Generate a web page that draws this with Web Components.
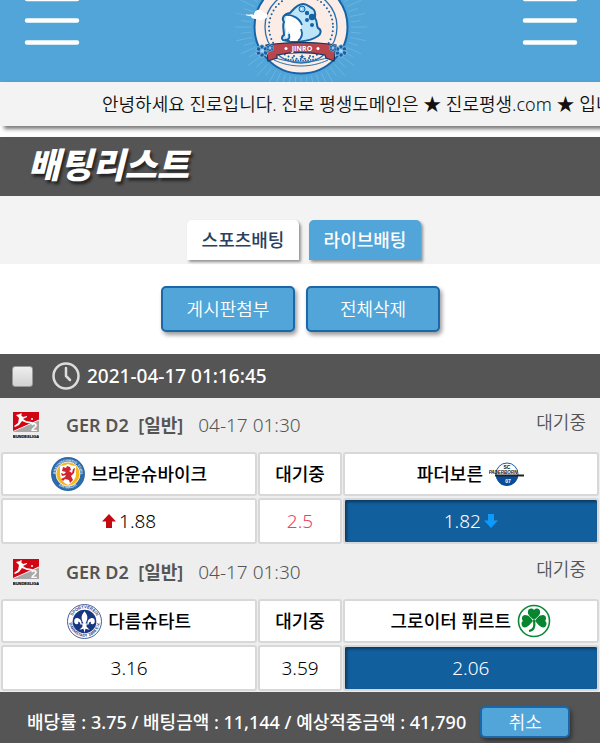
<!DOCTYPE html>
<html lang="ko">
<head>
<meta charset="utf-8">
<meta name="viewport" content="width=device-width, initial-scale=1">
<title>배팅리스트</title>
<style>
html{background:#fff}
body{margin:0;font:350 18px/24px "Noto Sans","Noto Sans CJK KR",sans-serif;color:#111;overflow-x:hidden;
--blue:#52a5d8;--deep:#125f9e;--dark:#555;--pale:#f3f3f3}
</style>
</head>
<body>
<bet-page></bet-page>
<script>
const define = (name, html, init) => {
  const t = document.createElement('template');
  t.innerHTML = html;
  customElements.define(name, class extends HTMLElement {
    connectedCallback() {
      if (this.shadowRoot) return;
      this.attachShadow({mode: 'open'}).append(t.content.cloneNode(true));
      if (init) init(this, this.shadowRoot);
    }
  });
};

/* Emblem: sunburst, toad inside a ring, ribbon with the name */
const rays = Array.from({length: 60}, (_, i) => {
  const a = i * Math.PI / 30, r = i % 2 ? 60 : 66;
  return `M${(80 + 50 * Math.cos(a)).toFixed(1)} ${(27 + 50 * Math.sin(a)).toFixed(1)}L${(80 + r * Math.cos(a)).toFixed(1)} ${(27 + r * Math.sin(a)).toFixed(1)}`;
}).join('');
const flower = (x, y, s) => `<g transform="translate(${x} ${y}) scale(${s})"><g fill="#1760a3" stroke="#8cc6ea" stroke-width=".8">${[0,60,120,180,240,300].map(a => `<circle cx="0" cy="-4" r="2.3" transform="rotate(${a})"/>`).join('')}</g><circle r="1.8" fill="#a5d8f4"/></g>`;

define('brand-emblem', `
<style>:host{display:block}svg{display:block;width:160px;height:82px}</style>
<svg viewBox="0 0 160 82" role="img" aria-label="JINRO">
<path d="${rays}" stroke="#6ab3df" stroke-width="1" fill="none"/>
<circle cx="80" cy="27" r="46.5" fill="#fbece5" stroke="#1663aa" stroke-width="2"/>
<circle cx="80" cy="27" r="36" fill="none" stroke="#2a70ad" stroke-width="1.3"/>
<circle cx="80" cy="27" r="32" fill="none" stroke="#1663aa" stroke-width="2" stroke-dasharray="0 4.2" stroke-linecap="round"/>
<path d="M62 40c-2-1-1-4 1-5 0-5-2-9 0-13-3-4 0-8 6-9 4-4 7-9 13-9 4 0 7 3 10 5 3 2 2 6 2 9 3 4 1 7 3 10 4 2 3 6 0 8-9 6-24 7-35 4z" fill="#bde5fa" stroke="#1762a3" stroke-width="2"/>
<path d="M65 16c8-2 13 4 15 10 1 4 1 10-2 15h-9c1-4 0-8-2-10l-1 7c-3-2 0-5-1-9-2-5 0-9 0-13z" fill="#fff"/>
<path d="M64 15c8-1 15 4 17 10M64 40c4 0 5-2 4-6M77 41c4-3 5-7 3-12" fill="none" stroke="#1762a3" stroke-width="1.800"/>
<circle cx="81" cy="9" r="3" fill="#8bceef" stroke="#1762a3"/><circle cx="80.500" cy="9" r="1" fill="#fff"/>
<g fill="#1762a3"><circle cx="86" cy="13" r="2.2"/><circle cx="91" cy="17" r="3.2"/><circle cx="86" cy="20" r="2"/><circle cx="91" cy="25" r="2"/></g>
<path d="M49 56c19 8 43 8 62 0M53 60c17 8 37 8 54 0" fill="none" stroke="#2a70ad" stroke-width="1"/>
<path d="M64 59c11 2 21 2 32 0" fill="none" stroke="#1663aa" stroke-width="1.500" stroke-dasharray="1.500 1"/>
<path d="M81 54l1 2h2l-2 1 1 2-2-1-2 1 1-2-2-1h2z" fill="#1663aa"/>
<circle cx="73" cy="56" r="1" fill="#1663aa"/><circle cx="89" cy="56" r="1" fill="#1663aa"/>
<path d="M53 44c18-2 38-2 55 0l7 1-2 16-8-3-1-3c-16-3-34-3-48 0v3l-9 3-2-16z" fill="#b9454d" stroke="#15375f" stroke-width="1.200"/>
<circle cx="65" cy="48.500" r="1.500" fill="#fff"/><circle cx="97" cy="48.500" r="1.500" fill="#fff"/>
<text x="81" y="51" text-anchor="middle" font-family="Open Sans,sans-serif" font-weight="700" font-size="7" fill="#fff">JINRO</text>
${flower(41,51,1)}${flower(49,48,.6)}${flower(120,51,1)}${flower(112,48,.6)}
<path d="M25 14c3 2 5-1 8 1 0-6 8-7 10-2 5 0 5 5 0 6-3 2-6 1-8 0-3 0-5-1-5-3-2 0-5 0-5-2z" fill="#fff"/>
</svg>`);

define('menu-button', `
<style>:host{display:block}button{display:block;padding:0;border:0;background:none}svg{display:block;width:56px;height:48px}</style>
<button type="button" aria-label="메뉴"><svg viewBox="0 0 56 48"><path d="M3-1h50M3 20.500h50M3 42.500h50" stroke="#fff" stroke-width="4.500" stroke-linecap="round"/></svg></button>`);

define('site-header', `
<style>:host{display:flex;justify-content:space-between;align-items:flex-start;padding:0 22px 0 24px;background:var(--blue);overflow:hidden}</style>
<menu-button></menu-button><brand-emblem></brand-emblem><menu-button></menu-button>`);

define('notice-bar', `
<style>:host{display:block;background:var(--pale);box-shadow:4px 3px 4px #0008;padding:10px 0 10px 102px;overflow:hidden;white-space:nowrap}</style><slot></slot>`);

define('page-title', `
<style>:host{display:block;margin-top:11px;background:var(--dark);box-shadow:3px 3px 4px #0006;padding:6px 28px 13px}
h1{margin:0;font:italic 900 35px/40px "Noto Sans CJK KR",sans-serif;color:#fff;text-shadow:2px 3px 3px #0009}</style><h1><slot></slot></h1>`);

define('tab-strip', `
<style>:host{display:flex;justify-content:center;gap:10px;padding:24px 0 4px 8px;background:var(--pale)}</style><slot></slot>`);

define('bet-tab', `
<style>:host{display:block}a{display:block;box-sizing:border-box;min-width:112px;padding:8px 14px;text-align:center;text-decoration:none;font-weight:500;color:#29405e;background:#fff;border-radius:5px 5px 0 0;box-shadow:2px 2px 3px #0006}
:host([active]) a{background:var(--blue);color:#fff}</style><a href="#"><slot></slot></a>`);

define('action-button', `
<style>:host{display:block}button{display:block;box-sizing:border-box;min-width:134px;padding:9px 10px;border:2px solid #1b67a8;border-radius:5px;background:var(--blue);color:#fff;font:inherit;line-height:24px;box-shadow:2px 3px 4px #0006}
:host([small]) button{min-width:90px;padding:2px 10px}</style><button type="button"><slot></slot></button>`);

define('action-row', `
<style>:host{display:flex;justify-content:center;gap:11px;padding:22px 0 22px 1px;background:#fff}</style><slot></slot>`);

define('slip-header', `
<style>:host{display:block;background:var(--dark)}
label{display:flex;align-items:center;padding:8px 12px;color:#fff;font-size:19px;font-weight:500;line-height:28px}
input{appearance:none;margin:0 19px 0 0;width:21px;height:21px;border:1px solid #999;border-radius:3px;background:linear-gradient(#eee,#d2d2d2)}
svg{width:28px;height:28px;margin-right:7px}</style>
<label><input type="checkbox"><svg viewBox="0 0 28 28" fill="none" stroke="#ddd" stroke-linecap="round" stroke-linejoin="round" aria-hidden="true"><circle cx="14" cy="14" r="12.500" stroke-width="2.500"/><path d="M14 6v8l4 4" stroke-width="2.500"/></svg><slot></slot></label>`);

define('league-logo', `
<style>:host{display:block}svg{display:block;width:26px;height:27px}</style>
<svg viewBox="0 0 26 27" role="img" aria-label="Bundesliga 2"><path d="M0 0h26v20H0z" fill="#d20515"/><path d="M0 20 26 8v12z" fill="#a7a7a7"/><path d="M0 19.500 26 8" stroke="#fff"/>
<path d="M3 3l4-1 1-1 1 1-1 1 2 2 4-1v1l-4 2 3 2 6 1 2 2-7-1-5-2-3 4-4 2-1-1 4-3 1-5-2-2z" fill="#fff"/><circle cx="19" cy="7" r="1" fill="#fff"/>
<text x="21" y="19" text-anchor="middle" font-family="Liberation Sans,sans-serif" font-weight="700" font-size="11" fill="#fff">2</text>
<text x="13" y="26" text-anchor="middle" font-family="Liberation Sans,sans-serif" font-weight="700" font-size="4" fill="#111" stroke="#111" stroke-width=".2">BUNDESLIGA</text></svg>`);

const ringText = (id, r, top, bottom, color, size) => `<defs><path id="${id}a" d="M${17-r} 17A${r} ${r} 0 0 1 ${17+r} 17"/><path id="${id}b" d="M${17-r-2} 17A${r+2} ${r+2} 0 0 0 ${17+r+2} 17"/></defs><g font-family="Liberation Sans,sans-serif" font-weight="700" font-size="${size}" fill="${color}" text-anchor="middle"><text><textPath href="#${id}a" startOffset="50%">${top}</textPath></text><text><textPath href="#${id}b" startOffset="50%">${bottom}</textPath></text></g>`;

const crests = {
  braunschweig: `<svg viewBox="0 0 34 34" width="34" height="34"><circle cx="17" cy="17" r="17" fill="#2c6aa9"/>${ringText('bs',12.5,'BRAUNSCHWEIG TURN','EINTRACHT','#e5eff7',3.4)}<circle cx="17" cy="17" r="12" fill="#f7b718" stroke="#fff" stroke-width=".8"/><path d="M9 9q4 0 8-2 4 2 8 2v8q0 7-8 11-8-4-8-11z" fill="#fff"/>
<path d="M12 10l3 1 1-2 3 1 1 3-2 1 3 2 1-4 2-1-1 5-3 3 2 4-3 3-1-3-4-1-2 2-2-2 4-2 1-2-4 1-1-3 3 1 2-2-4-1z" fill="#cf2331"/></svg>`,
  darmstadt: `<svg viewBox="0 0 34 34" width="35" height="35"><circle cx="17" cy="17" r="16.500" fill="#fff" stroke="#213c86" stroke-width=".8"/>${ringText('da',12.7,'SPORTVEREIN','DARMSTADT 1898 E.V.','#213c86',4)}<circle cx="17" cy="17" r="11.500" fill="#173784"/>
<path d="M17 7c3 4 4 6 1 12h2c-1-5 7-8 7-2 0 3-3 3-4 2 1-3-2-2-2 1h-2v2l3 3-4-1-1 4-1-4-4 1 3-3v-2h-2c0-3-3-4-2-1-1 1-4 1-4-2 0-6 8-3 7 2h2c-3-6-2-8 1-12z" fill="#fff"/></svg>`,
  paderborn: `<svg viewBox="0 0 36 24" width="36" height="24"><circle cx="18" cy="12" r="11" fill="#fff" stroke="#145faa"/><path d="M7 13h22a11 11 0 0 1-22 0z" fill="#074f9b"/><path d="M6 13.500h29" stroke="#222" stroke-width="2"/><g font-family="Liberation Sans,sans-serif" font-weight="700" text-anchor="middle" fill="#111"><text x="18" y="7" font-size="5">SC</text><text x="14" y="12" font-size="4.500" font-style="italic">PADERBORN</text><text x="19" y="21" font-size="5" fill="#fff">07</text></g></svg>`,
  fuerth: `<svg viewBox="0 0 34 34" width="34" height="34"><circle cx="17" cy="17" r="15.500" fill="#fff" stroke="#0b8738" stroke-width="1.600"/>
<g fill="#07852f"><path d="M17 16c-3-3-7-5-6-9 1-3 4-3 6-1 2-2 5-2 6 1 1 4-3 6-6 9z"/><path d="M16 17c-3 3-6 8-10 6-2-2-2-5 0-6-2-2-1-6 2-6 4 0 6 3 8 6zM18 17c3 3 6 8 10 6 2-2 2-5 0-6 2-2 1-6-2-6-4 0-6 3-8 6z"/></g><path d="M17 16c1 7 0 10-5 11" fill="none" stroke="#07852f" stroke-width="2.200"/></svg>`
};
define('team-crest', `<style>:host{display:block}svg{display:block}</style>`, (el, root) => {
  const t = document.createElement('template');
  t.innerHTML = crests[el.getAttribute('club')];
  root.append(t.content.cloneNode(true));
});

define('move-arrow', `
<style>:host{display:block;color:#c40a10}:host([down]){color:#0c9bfa}:host([down]) svg{transform:rotate(180deg)}svg{display:block;width:14px;height:14px}</style>
<svg viewBox="0 0 14 14" aria-hidden="true"><path d="M7 0l7 7.500H10V14H4V7.500H0z" fill="currentColor"/></svg>`);

define('match-card', `
<style>
:host{display:block;background:#eee;color:#000}
header{display:flex;align-items:center;padding:0 14px 0 13px;height:54px;color:#555}
league-logo{margin-right:27px}
b{font-weight:600;margin-right:15px;white-space:pre}
time{font-size:19px}
.state{margin-left:auto;padding-bottom:6px}
table{width:100%;table-layout:fixed;border-collapse:separate;border-spacing:1px 2px;margin:-2px 0 -1px}
col.side{width:43%}
th,td{box-sizing:border-box;padding:0;border:2px solid #d8d8d8;border-radius:3px;background:#fff;text-align:center}
th{height:44px;font-weight:500}td{height:46px;font-size:19px}
.line{display:flex;align-items:center;justify-content:center;gap:6px}
td .line{gap:3px}
td.pick{background:var(--deep);color:#fff;box-shadow:inset 2px 2px 3px #0006}
:host([void-draw]) .draw{color:#ef4263}
</style>
<header><league-logo></league-logo><b>GER D2  [일반]</b><time>04-17 01:30</time><span class="state">대기중</span></header>
<table><colgroup><col class="side"><col><col class="side"></colgroup>
<thead><tr><th scope="col"><div class="line"><slot name="home"></slot></div></th><th scope="col">대기중</th><th scope="col"><div class="line"><slot name="away"></slot></div></th></tr></thead>
<tbody><tr><td><div class="line"><slot name="home-odds"></slot></div></td><td class="draw"><slot name="draw-odds"></slot></td><td class="pick"><div class="line"><slot name="away-odds"></slot></div></td></tr></tbody></table>`);

define('slip-footer', `
<style>:host{display:flex;align-items:center;gap:14px;padding:14px 28px 5px 27px;background:var(--dark);color:#fff;font-weight:500;white-space:nowrap}
action-button{font-weight:350}</style><slot></slot><action-button small>취소</action-button>`);

define('bet-page', `
<style>:host{display:block}</style>
<site-header></site-header>
<notice-bar>안녕하세요 진로입니다. 진로 평생도메인은 ★ 진로평생.com ★ 입니다</notice-bar>
<page-title>배팅리스트</page-title>
<tab-strip><bet-tab>스포츠배팅</bet-tab><bet-tab active>라이브배팅</bet-tab></tab-strip>
<action-row><action-button>게시판첨부</action-button><action-button>전체삭제</action-button></action-row>
<slip-header>2021-04-17 01:16:45</slip-header>
<match-card void-draw>
<team-crest slot="home" club="braunschweig"></team-crest><span slot="home">브라운슈바이크</span>
<span slot="away">파더보른</span><team-crest slot="away" club="paderborn"></team-crest>
<move-arrow slot="home-odds"></move-arrow><span slot="home-odds">1.88</span>
<span slot="draw-odds">2.5</span>
<span slot="away-odds">1.82</span><move-arrow slot="away-odds" down></move-arrow>
</match-card>
<match-card>
<team-crest slot="home" club="darmstadt"></team-crest><span slot="home">다름슈타트</span>
<span slot="away">그로이터 퓌르트</span><team-crest slot="away" club="fuerth"></team-crest>
<span slot="home-odds">3.16</span><span slot="draw-odds">3.59</span><span slot="away-odds">2.06</span>
</match-card>
<slip-footer><span>배당률 : 3.75 / 배팅금액 : 11,144 / 예상적중금액 : 41,790</span></slip-footer>`);
</script>
</body>
</html>
